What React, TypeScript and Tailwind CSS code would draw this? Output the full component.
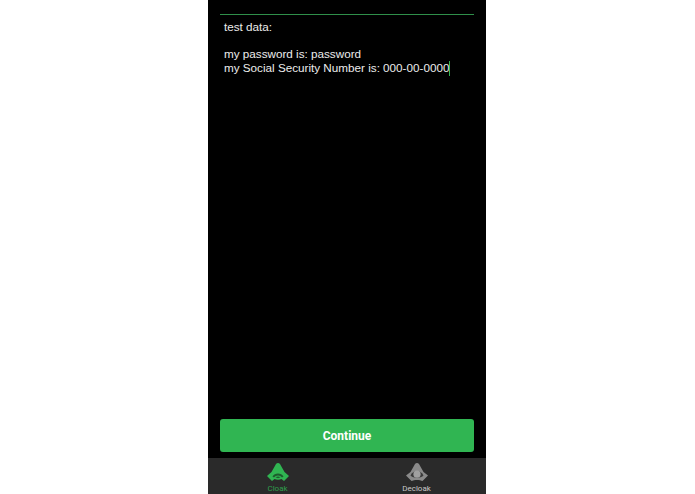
// App.tsx
export default function App() {
  return (
    <div className="flex h-[494px] w-[695px] overflow-hidden bg-white pl-[208px] font-['Liberation_Sans',Arial,sans-serif]">
      <div className="flex h-full w-[278px] flex-col bg-black">
        {/* Поле ввода */}
        <div className="flex-1 px-3 pt-[14px]">
          <div className="h-px w-full bg-[#2f8f4a]" />
          <div className="px-1 pt-[5px] text-[11.7px] leading-[13.5px] whitespace-nowrap text-[#ececec]">
            <div>test data:</div>
            <div className="h-[13.5px]" />
            <div>my password is: password</div>
            <div className="flex items-center">
              my Social Security Number is: 000-00-0000
              <span className="h-[15px] w-px bg-[#34b553]" />
            </div>
          </div>
        </div>

        {/* Кнопка */}
        <div className="px-3 pb-[6px]">
          <button className="h-[33px] w-full rounded-[3px] bg-[#30b552] pt-px font-['Roboto',Arial,sans-serif] text-[12px] font-bold text-white">
            Continue
          </button>
        </div>

        {/* Таббар */}
        <div className="flex h-[36px] bg-[#2a2a2a]">
          <div className="flex flex-1 flex-col items-center pt-[5px]">
            <svg width="22" height="19" viewBox="0 0 22 19">
              <path d="M9 1 C10 -0.3 12 -0.3 13 1 L17.5 9 L22 13 L17 18 L14.5 16 C12.5 17 9.5 17 7.5 16 L5 18 L0 13 L4.5 9Z" fill="#30b552" />
              <path d="M5.5 13.5 C7.5 9.5 14.5 9.5 16.5 13.5 L15 14.5 C13 11.8 9 11.8 7 14.5Z" fill="#1d5c2d" />
              <path d="M8.5 14.3 C10 13.2 12 13.2 13.5 14.3 C12 15.4 10 15.4 8.5 14.3Z" fill="#1d5c2d" />
            </svg>
            <span className="mt-[2px] font-['Roboto',Arial,sans-serif] text-[8px] leading-[10px] text-[#2f9d4c]">Cloak</span>
          </div>
          <div className="flex flex-1 flex-col items-center pt-[5px]">
            <svg width="22" height="19" viewBox="0 0 22 19">
              <path d="M9 1 C10 -0.3 12 -0.3 13 1 L17.5 9 L22 12.5 L16.5 18 C14 16.5 8 16.5 5.5 18 L0 12.5 L4.5 9Z" fill="#8a8a8a" />
              <path d="M4.5 12.5 C7 6.5 15 6.5 17.5 12.5 C15 15.5 7 15.5 4.5 12.5Z" fill="#3a3a3a" />
              <circle cx="11" cy="11.2" r="3.6" fill="#a0a0a0" />
            </svg>
            <span className="mt-[2px] font-['Roboto',Arial,sans-serif] text-[8px] leading-[10px] text-[#c8c8c8]">Decloak</span>
          </div>
        </div>
      </div>
    </div>
  );
}
